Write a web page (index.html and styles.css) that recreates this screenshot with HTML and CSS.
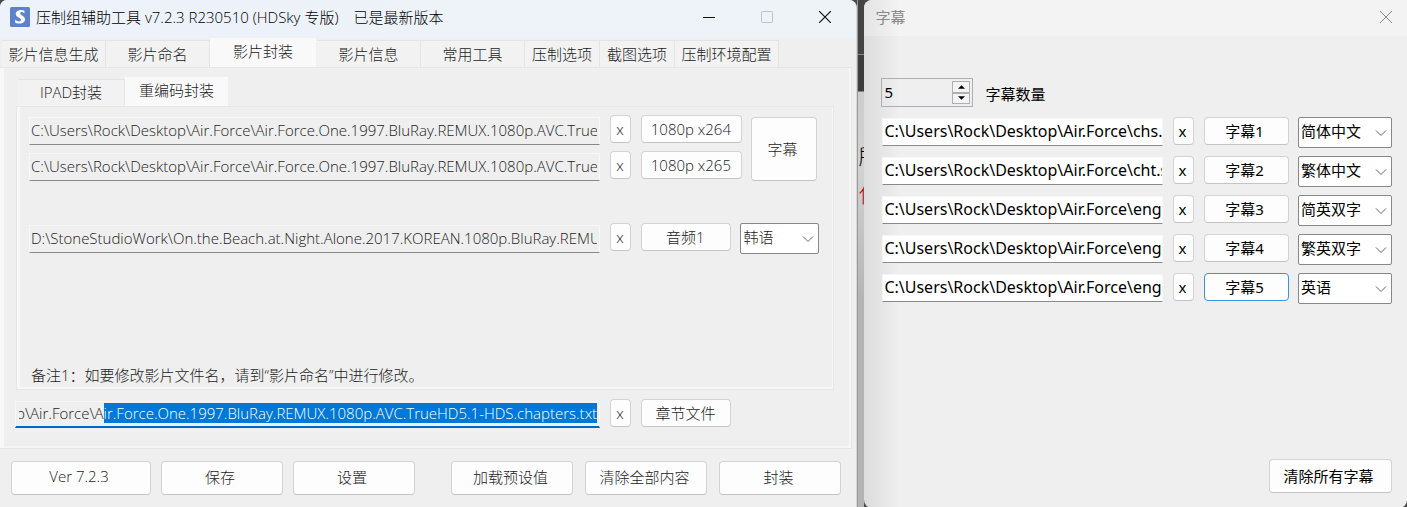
FILE: index.html
```html
<!DOCTYPE html>
<html lang="zh-CN">
<head>
<meta charset="utf-8">
<title>压制组辅助工具</title>
<link rel="stylesheet" href="styles.css">
</head>
<body>
<div class="desktop">
  <main class="window main-window">
    <header class="titlebar">
      <svg class="app-icon" viewBox="0 0 20 20" aria-hidden="true"><rect width="20" height="20" rx="1.500" fill="#5b82cb"/><path d="M14.500 3.800L14.300 6.800C13.500 5 10.500 4.300 10.200 6.200C10 8.300 15.200 8.600 15 12.500C14.800 17.300 7.500 17.300 5 15.500L5.200 12.600C7 14.800 10.800 15.200 11 13C11.100 10.600 5.600 10.400 5.800 6.800C6 2.600 12 2.300 14.500 3.800Z" fill="#fff"/></svg>
      <h1 class="title">压制组辅助工具 v7.2.3 R230510 (HDSky 专版)</h1>
      <span class="title-status">已是最新版本</span>
      <div class="caption-buttons">
        <button class="caption" aria-label="最小化"><svg viewBox="0 0 12 12"><path d="M0 6.500H12" stroke="#111"/></svg></button>
        <button class="caption" aria-label="最大化" disabled><svg viewBox="0 0 12 12"><rect x=".5" y=".5" width="11" height="11" rx="1" fill="none" stroke="#bcc2c8"/></svg></button>
        <button class="caption" aria-label="关闭"><svg viewBox="0 0 12 12"><path d="M0 0L12 12M12 0L0 12" stroke="#111" stroke-width="1.200"/></svg></button>
      </div>
    </header>

    <nav class="tabs outer-tabs" role="tablist">
      <button class="tab" role="tab">影片信息生成</button>
      <button class="tab" role="tab">影片命名</button>
      <button class="tab selected wide" role="tab" aria-selected="true">影片封装</button>
      <button class="tab" role="tab">影片信息</button>
      <button class="tab" role="tab">常用工具</button>
      <button class="tab narrow" role="tab">压制选项</button>
      <button class="tab narrow" role="tab">截图选项</button>
      <button class="tab" role="tab">压制环境配置</button>
    </nav>

    <section class="outer-panel">
      <nav class="tabs inner-tabs" role="tablist">
        <button class="tab wide" role="tab">IPAD封装</button>
        <button class="tab selected" role="tab" aria-selected="true">重编码封装</button>
      </nav>
      <section class="inner-panel">
        <div class="encode">
          <div class="encode-rows">
            <div class="row">
              <input class="path" type="text" readonly aria-label="x264 路径" value="C:\Users\Rock\Desktop\Air.Force\Air.Force.One.1997.BluRay.REMUX.1080p.AVC.TrueHD5.1">
              <button class="btn clear">x</button>
              <button class="btn encoder">1080p x264</button>
            </div>
            <div class="row">
              <input class="path" type="text" readonly aria-label="x265 路径" value="C:\Users\Rock\Desktop\Air.Force\Air.Force.One.1997.BluRay.REMUX.1080p.AVC.TrueHD5.1">
              <button class="btn clear">x</button>
              <button class="btn encoder">1080p x265</button>
            </div>
          </div>
          <button class="btn subtitle">字幕</button>
        </div>
        <div class="row audio">
          <input class="path" type="text" readonly aria-label="音频路径" value="D:\StoneStudioWork\On.the.Beach.at.Night.Alone.2017.KOREAN.1080p.BluRay.REMUX">
          <button class="btn clear">x</button>
          <button class="btn file">音频1</button>
          <div class="combo audio-language">
            <select aria-label="音频语言"><option>韩语</option></select>
            <svg viewBox="0 0 12 8" aria-hidden="true"><path d="M1 1.500L6 6.500L11 1.500" fill="none" stroke="#666"/></svg>
          </div>
        </div>
        <p class="note">备注1：如要修改影片文件名，请到“影片命名”中进行修改。</p>
      </section>
      <div class="row chapter">
        <input class="path focused" id="chapter" type="text" aria-label="章节文件路径" value="C:\Users\Rock\Desktop\Air.Force\Air.Force.One.1997.BluRay.REMUX.1080p.AVC.TrueHD5.1-HDS.chapters.txt">
        <button class="btn clear">x</button>
        <button class="btn file">章节文件</button>
      </div>
    </section>

    <footer class="actions">
      <div class="group">
        <button class="btn action version">Ver 7.2.3</button>
        <button class="btn action">保存</button>
        <button class="btn action">设置</button>
      </div>
      <div class="group spaced">
        <button class="btn action">加载预设值</button>
        <button class="btn action">清除全部内容</button>
        <button class="btn action">封装</button>
      </div>
    </footer>
  </main>

  <div class="backdrop" aria-hidden="true">
    <span class="fragment">所</span>
    <span class="fragment red">作</span>
  </div>

  <aside class="window dialog">
    <header class="titlebar">
      <h2 class="title">字幕</h2>
      <div class="caption-buttons">
        <button class="caption" aria-label="关闭"><svg viewBox="0 0 12 12"><path d="M0 0L12 12M12 0L0 12" stroke="#888"/></svg></button>
      </div>
    </header>
    <div class="dialog-body">
      <div class="count">
        <div class="spinner">
          <input id="count" type="number" value="5">
          <div class="steps">
            <button class="step" aria-label="增加"><svg viewBox="0 0 8 4"><path d="M0 4L4 0L8 4Z"/></svg></button>
            <button class="step" aria-label="减少"><svg viewBox="0 0 8 4"><path d="M0 0L4 4L8 0Z"/></svg></button>
          </div>
        </div>
        <label for="count">字幕数量</label>
      </div>
      <div class="subtitle-rows">
        <div class="row">
          <input class="path" type="text" aria-label="字幕1 路径" value="C:\Users\Rock\Desktop\Air.Force\chs.">
          <button class="btn clear">x</button>
          <button class="btn pick">字幕1</button>
          <div class="combo"><select aria-label="字幕1 语言"><option>简体中文</option></select><svg viewBox="0 0 12 8" aria-hidden="true"><path d="M1 1.500L6 6.500L11 1.500" fill="none" stroke="#666"/></svg></div>
        </div>
        <div class="row">
          <input class="path" type="text" aria-label="字幕2 路径" value="C:\Users\Rock\Desktop\Air.Force\cht.srt">
          <button class="btn clear">x</button>
          <button class="btn pick">字幕2</button>
          <div class="combo"><select aria-label="字幕2 语言"><option>繁体中文</option></select><svg viewBox="0 0 12 8" aria-hidden="true"><path d="M1 1.500L6 6.500L11 1.500" fill="none" stroke="#666"/></svg></div>
        </div>
        <div class="row">
          <input class="path" type="text" aria-label="字幕3 路径" value="C:\Users\Rock\Desktop\Air.Force\eng">
          <button class="btn clear">x</button>
          <button class="btn pick">字幕3</button>
          <div class="combo"><select aria-label="字幕3 语言"><option>简英双字</option></select><svg viewBox="0 0 12 8" aria-hidden="true"><path d="M1 1.500L6 6.500L11 1.500" fill="none" stroke="#666"/></svg></div>
        </div>
        <div class="row">
          <input class="path" type="text" aria-label="字幕4 路径" value="C:\Users\Rock\Desktop\Air.Force\eng">
          <button class="btn clear">x</button>
          <button class="btn pick">字幕4</button>
          <div class="combo"><select aria-label="字幕4 语言"><option>繁英双字</option></select><svg viewBox="0 0 12 8" aria-hidden="true"><path d="M1 1.500L6 6.500L11 1.500" fill="none" stroke="#666"/></svg></div>
        </div>
        <div class="row">
          <input class="path" type="text" aria-label="字幕5 路径" value="C:\Users\Rock\Desktop\Air.Force\eng">
          <button class="btn clear">x</button>
          <button class="btn pick current">字幕5</button>
          <div class="combo"><select aria-label="字幕5 语言"><option>英语</option></select><svg viewBox="0 0 12 8" aria-hidden="true"><path d="M1 1.500L6 6.500L11 1.500" fill="none" stroke="#666"/></svg></div>
        </div>
      </div>
      <button class="btn clear-all">清除所有字幕</button>
    </div>
  </aside>
</div>
<script src="main.js"></script>
</body>
</html>
```
FILE: styles.css
```css
* { box-sizing: border-box; }

body {
  margin: 0;
  background: #4a4a4a;
  color: #1c1c1c;
  font: 300 15px/20px "Open Sans", "Noto Sans CJK SC", sans-serif;
}

button, input, select {
  font: inherit;
  color: inherit;
  margin: 0;
  padding: 0;
  border-radius: 0;
}

h1, h2, p { margin: 0; font: inherit; }

.desktop { display: flex; min-height: 100vh; }

.window {
  display: flex;
  flex-direction: column;
  min-width: 0;
  background: #efefef;
}

.main-window {
  flex: 857 1 0;
  border-right: 1px solid #d8d8d8;
  border-radius: 7px 8px 0 0;
}

.titlebar { display: flex; align-items: center; height: 38px; }

.main-window .titlebar {
  padding: 0 2px 4px 10px;
  border-radius: 7px 7px 0 0;
  background: linear-gradient(90deg, #edf2fb, #eef3f8);
  color: #000;
}

.app-icon { width: 20px; height: 20px; margin-right: 6px; }
.title-status { margin-left: 15px; }
.caption-buttons { display: flex; margin-left: auto; }

.caption {
  display: flex;
  align-items: center;
  justify-content: center;
  width: 58px;
  height: 34px;
  border: 0;
  background: none;
}

.caption svg { width: 12px; height: 12px; }

.tabs { display: flex; align-items: flex-end; height: 29px; }
.outer-tabs { padding-left: 2px; }

.tab {
  width: 104px;
  height: 27px;
  padding-bottom: 1px;
  border: 1px solid #e4e4e4;
  border-width: 1px 1px 0 0;
  background: #f2f2f2;
  white-space: nowrap;
}

.tab.wide { width: 107px; }
.tab.narrow { width: 75px; }
.inner-tabs .tab { padding-bottom: 2px; }

.tab.selected {
  height: 30px;
  padding-bottom: 3px;
  border-color: #f0f0f0;
  background: #f9f9f9;
}

.outer-panel {
  display: flex;
  flex-direction: column;
  margin-right: 4px;
  padding: 9px 17px 20px 12px;
  border: 1px solid #e6e6e6;
  border-width: 1px 1px 1px 0;
  box-shadow: inset 4px 0 #f8f8f8, inset -2px -2px #f6f6f6;
}

.inner-tabs { padding-left: 6px; }

.inner-panel {
  display: flex;
  flex-direction: column;
  height: 284px;
  margin-left: 4px;
  padding: 8px 16px 4px 12px;
  border: 1px solid #e6e6e6;
  box-shadow: inset 3px 0 #f8f8f8, inset -1px -2px #f6f6f6;
}

.row { display: flex; align-items: flex-start; }

.path {
  flex: 1;
  min-width: 0;
  height: 28px;
  padding: 0 2px 2px 1px;
  border: 1px solid #f7f7f7;
  border-bottom-color: #8a8a8a;
  background: #efefef;
  outline: 0;
}

.path::selection { background: #0078d7; color: #fff; }

.path.focused { padding-left: 3px; border-bottom: 2px solid #0067c0; }

.btn {
  height: 28px;
  padding: 0 2px 1px 0;
  border: 1px solid #d3d3d3;
  border-bottom-color: #c4c4c4;
  border-radius: 4px;
  background: #fdfdfd;
  white-space: nowrap;
}

.clear { width: 21px; margin: 0 10px; padding-bottom: 0; }
.encoder { width: 101px; }
.file { width: 90px; }

.encode { display: flex; gap: 9px; }
.encode-rows { flex: 1; display: flex; flex-direction: column; gap: 8px; min-width: 0; }
.encode-rows .row { height: 28px; }
.subtitle { width: 66px; height: 64px; margin-top: 2px; padding-right: 4px; }
.row .path { margin-top: 2px; }
.audio { margin: 42px -2px 0 0; }

.combo { position: relative; width: 94px; height: 31px; }
.audio-language { width: 79px; margin-left: 9px; }

.combo select {
  width: 100%;
  height: 100%;
  padding: 0 2px 3px 2px;
  border: 1px solid #888;
  border-radius: 2px;
  background: #fff;
  appearance: none;
}

.combo svg {
  position: absolute;
  right: 5px;
  top: 12px;
  width: 12px;
  height: 8px;
  pointer-events: none;
}

.note { margin-top: auto; padding-left: 2px; }

.chapter { margin: 9px 103px 0 3px; }
.chapter .path { height: 27px; }

.actions {
  display: flex;
  justify-content: space-between;
  padding: 12px 15px 13px 11px;
}

.group { display: flex; gap: 10px; }
.group.spaced { gap: 12px; }
.action { width: 122px; height: 34px; padding: 0 4px 2px 0; }
.version { width: 140px; padding-bottom: 5px; }

.backdrop {
  flex: 0 0 7px;
  padding-top: 143px;
  overflow: hidden;
  border-left: 1px solid #999;
  background: linear-gradient(#444 54px, #888 54px, #888 55px, #3d3d3d 55px, #3d3d3d 91px, #ccc 92px, #d2d2d2 170px, #b4b4b4 300px);
}

.fragment {
  display: block;
  width: 24px;
  height: 38px;
  color: #000;
  font-size: 22px;
  line-height: 24px;
}

.fragment.red { color: #c80000; }

.dialog {
  flex: 543 1 0;
  border-radius: 8px 0 8px 8px;
  background: linear-gradient(90deg, #dcdcdc, #efefef 36px);
  color: #000;
  font-family: "Noto Sans", "Noto Sans CJK SC", sans-serif;
  font-weight: 400;
}

.dialog .titlebar {
  height: 36px;
  padding-left: 11px;
  padding-bottom: 2px;
  border-radius: 8px 0 0 0;
  background: linear-gradient(90deg, #e4e4e4, #f3f3f3 36px);
  color: #888;
}

.dialog .caption { width: 42px; }

.dialog-body {
  flex: 1;
  display: flex;
  flex-direction: column;
  padding: 42px 15px 15px 17px;
}

.count { display: flex; align-items: center; gap: 12px; }
.count label { padding-top: 3px; }

.spinner {
  display: flex;
  width: 92px;
  height: 29px;
  padding: 2px;
  border: 1px solid #aeaeb4;
}

.spinner input {
  flex: 1;
  min-width: 0;
  padding-bottom: 2px;
  border: 0;
  background: none;
  outline: 0;
  appearance: textfield;
}

.spinner input::-webkit-inner-spin-button { display: none; }
.steps { display: flex; flex-direction: column; width: 18px; }

.step {
  flex: 1;
  display: flex;
  align-items: center;
  justify-content: center;
  border: 1px solid #b0b0b0;
  background: #f4f4f4;
}

.step svg { width: 7px; height: 4px; }

.subtitle-rows {
  display: flex;
  flex-direction: column;
  gap: 8px;
  margin-top: 10px;
}

.subtitle-rows .path {
  margin: 1px 0 0 1px;
  padding-right: 0;
  background: #fff;
  font-size: 16px;
}

.subtitle-rows .pick { margin-right: 9px; padding-right: 4px; }
.pick { width: 85px; }
.pick.current { border-color: #3a94dc; }
.clear-all { width: 123px; height: 34px; margin: auto 0 0 auto; padding-right: 4px; }
```
FILE: main.js
```js
const chapter = document.getElementById("chapter");
const start = chapter.value.indexOf("ir.Force.One");
chapter.focus();
chapter.setSelectionRange(start, chapter.value.length);
chapter.scrollLeft = chapter.scrollWidth;
```
